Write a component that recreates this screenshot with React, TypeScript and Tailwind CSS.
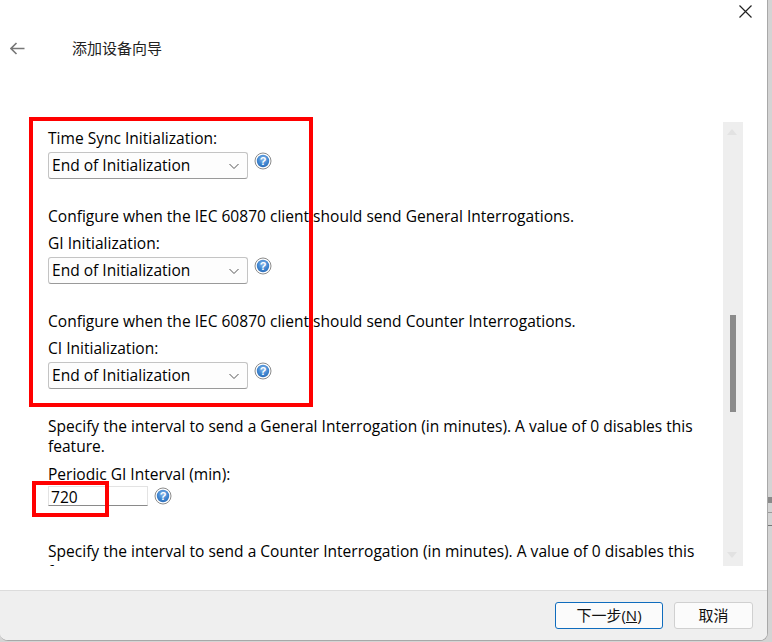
import React from "react";

const font = { fontFamily: '"Open Sans", "Noto Sans CJK SC", sans-serif' };

const HelpIcon = () => (
  <svg width="18" height="18" viewBox="0 0 18 18" className="shrink-0">
    <defs>
      <radialGradient id="helpBlue" cx="50%" cy="35%" r="70%">
        <stop offset="0%" stopColor="#8ab8ea" />
        <stop offset="60%" stopColor="#3f86d0" />
        <stop offset="100%" stopColor="#2a69b5" />
      </radialGradient>
    </defs>
    <circle cx="9" cy="9" r="8" fill="#fff" stroke="#8c8c8c" strokeWidth="1" />
    <circle cx="9" cy="9" r="6.2" fill="url(#helpBlue)" />
    <text x="9" y="13" textAnchor="middle" fontSize="11" fontWeight="700" fill="#fff" fontFamily="Liberation Sans, sans-serif">
      ?
    </text>
  </svg>
);

const SelectField = ({ label }: { label: string }) => (
  <div>
    <div className="h-5 leading-5">{label}</div>
    <div className="mt-[4px] flex items-start gap-[6px]">
      <div className="flex h-[27px] w-[200px] items-center justify-between rounded-[3px] border border-[#c4c4c4] border-b-[#9a9a9a] bg-[#fdfdfd] pl-[3px] pr-[7px]">
        <span>End of Initialization</span>
        <svg width="12" height="12" viewBox="0 0 12 12" fill="none" stroke="#555" strokeWidth="1">
          <path d="M1.5 4 L6 8.5 L10.5 4" />
        </svg>
      </div>
      <HelpIcon />
    </div>
  </div>
);

export default function App() {
  return (
    <div className="relative h-[642px] w-[772px] overflow-hidden bg-[#d4d4d4] text-[15.55px] text-black" style={font}>
      <div className="flex h-[641px] w-[768px] flex-col overflow-hidden rounded-b-lg border-r border-b border-[#a8a8a8] bg-white">
        {/* title area */}
        <div className="h-[122px] shrink-0">
          <div className="flex justify-end pr-[15px] pt-[5px]">
            <svg width="13" height="13" viewBox="0 0 13 13" stroke="#222" strokeWidth="1.2">
              <path d="M0.5 0.5 L12.5 12.5 M12.5 0.5 L0.5 12.5" />
            </svg>
          </div>
          <div className="mt-[19px] flex items-center pl-[10px]">
            <svg width="15" height="13" viewBox="0 0 15 13" fill="none" stroke="#777" strokeWidth="1.6">
              <path d="M14.5 6.5 H1 M6.5 1 L1 6.5 L6.5 12" />
            </svg>
            <span className="ml-[47px] text-[15px] text-[#222]">添加设备向导</span>
          </div>
        </div>

        {/* scrolling body */}
        <div className="flex h-[444px] shrink-0">
          <div className="w-[723px] overflow-hidden pl-[48px] pr-[24px] pt-[6px]">
            <SelectField label="Time Sync Initialization:" />
            <p className="mt-[27px] h-5 leading-5">Configure when the IEC 60870 client should send General Interrogations.</p>
            <div className="mt-[7px]">
              <SelectField label="GI Initialization:" />
            </div>
            <p className="mt-[27px] h-5 leading-5">Configure when the IEC 60870 client should send Counter Interrogations.</p>
            <div className="mt-[7px]">
              <SelectField label="CI Initialization:" />
            </div>
            <p className="mt-[27px] leading-5">
              Specify the interval to send a General Interrogation (in minutes). A value of 0 disables this feature.
            </p>
            <div className="mt-[8px] h-5 leading-5">Periodic GI Interval (min):</div>
            <div className="mt-[2px] flex items-center gap-[6px]">
              <div className="flex h-[20px] w-[100px] items-center border border-[#e3e3e3] border-b-[#8a8a8a] pl-[2px] pt-[3px]">720</div>
              <HelpIcon />
            </div>
            <p className="mt-[35px] leading-5">
              Specify the interval to send a Counter Interrogation (in minutes). A value of 0 disables this feature.
            </p>
          </div>
          {/* scrollbar */}
          <div className="relative h-full w-5 bg-[#eeeeee]">
            <div className="absolute left-[4px] top-[7px] h-0 w-0 border-x-[5px] border-b-[6px] border-x-transparent border-b-[#e2e2e2]" />
            <div className="absolute left-[7px] top-[193px] h-[97px] w-[6px] bg-[#8b8b8b]" />
            <div className="absolute bottom-[8px] left-[4px] h-0 w-0 border-x-[5px] border-t-[6px] border-x-transparent border-t-[#e2e2e2]" />
          </div>
        </div>

        <div className="h-6 shrink-0" />

        {/* footer */}
        <div className="flex flex-1 items-start justify-end gap-[11px] border-t border-[#dcdcdc] bg-[#efefef] pr-[14px] pt-[11px] text-[15px]">
          <button className="flex h-[27px] w-[108px] items-center justify-center rounded-[3px] border border-[#0f6cbd] bg-[#fbfbfb] text-[#111]">
            下一步(<span className="underline">N</span>)
          </button>
          <button className="flex h-[27px] w-[79px] items-center justify-center rounded-[3px] border border-[#d0d0d0] bg-[#fbfbfb] text-[#111]">
            取消
          </button>
        </div>
      </div>

      {/* bits of the desktop showing behind the dialog */}
      <div className="absolute left-[768px] top-[497px] h-[6px] w-1 bg-[#8a8a8a]" />
      <div className="absolute left-[768px] top-[512px] h-px w-1 bg-[#9a9a9a]" />
      <div className="absolute left-[768px] top-[525px] h-px w-1 bg-[#777]" />

      {/* red annotation boxes */}
      <div className="absolute left-[29px] top-[117px] h-[290px] w-[284px] border-4 border-[#ff0000]" />
      <div className="absolute left-[32px] top-[481px] h-[36px] w-[77px] border-4 border-[#ff0000]" />
    </div>
  );
}
